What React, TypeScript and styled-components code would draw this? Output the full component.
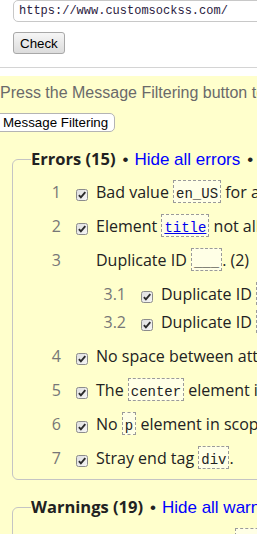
import React from "react";
import styled, { createGlobalStyle } from "styled-components";

const GlobalStyle = createGlobalStyle`
  html, body { margin: 0; padding: 0; overflow: hidden; background: #fff; }
  body { font-family: "Liberation Sans", Arial, sans-serif; }
`;

const Header = styled.div`
  display: flex;
  flex-direction: column;
  align-items: flex-start;
  gap: 10px;
  padding: 0 0 13px 13px;
  border-bottom: 1px solid #d4d4d4;
  margin-bottom: 8px;
`;

const UrlInput = styled.input`
  box-sizing: border-box;
  width: 600px;
  height: 22px;
  margin: 0;
  padding: 0 5px;
  border: 1px solid #c8c8c8;
  border-radius: 5px;
  background: #fff;
  color: #2a2040;
  font: 12px "Liberation Mono", monospace;
  outline: none;
`;

const CheckButton = styled.button`
  box-sizing: border-box;
  height: 22px;
  margin: 0;
  padding: 0 6px;
  border: 1px solid #a8a8a8;
  border-radius: 3px;
  background: linear-gradient(#f6f6f6, #dcdcdc);
  color: #000;
  font: 13.33px "Liberation Sans", Arial, sans-serif;
`;

const Results = styled.div`
  width: 900px;
  min-height: 700px;
  padding: 8px 0 40px;
  background: #ffffcc;
  font-family: "Open Sans", "Noto Sans", sans-serif;
`;

const Intro = styled.p`
  margin: 0;
  color: #6a6a6a;
  font: 16px/18px "Liberation Sans", Arial, sans-serif;
  white-space: nowrap;
`;

const FilterBar = styled.div`
  margin-top: 8px;
`;

const FilterButton = styled.button`
  box-sizing: border-box;
  height: 19px;
  margin: 0 0 0 -5px;
  padding: 0 6px 0 7px;
  border: 1px solid #b4b4b4;
  border-radius: 5px;
  background: #fff;
  color: #000;
  font: 13.33px/15px "Liberation Sans", Arial, sans-serif;
`;

const Group = styled.fieldset`
  box-sizing: border-box;
  width: 800px;
  min-width: 0;
  margin: 16px 0 0 12px;
  padding: 0 0 9px 18px;
  border: 1px solid #c4c4c4;
  border-radius: 6px;
`;

const Legend = styled.legend`
  padding: 0;
  color: #222;
  font-size: 17px;
  line-height: 22px;
  white-space: nowrap;
`;

const LegendTitle = styled.span`
  font-family: "Open Sans", "Noto Sans", sans-serif;
  font-size: 16.5px;
  font-weight: 700;
`;

const Bullet = styled.span`
  margin: 0 6px 0 7px;
  font-family: "Liberation Sans", Arial, sans-serif;
`;

const LegendLink = styled.a`
  color: #0000ff;
  text-decoration: none;
  font-family: "Liberation Sans", Arial, sans-serif;
`;

const List = styled.ol<{ $nested?: boolean }>`
  list-style: none;
  margin: 0;
  padding: ${(p) => (p.$nested ? "10px 0 0 65px" : "9px 0 0")};
  display: flex;
  flex-direction: column;
  gap: ${(p) => (p.$nested ? "4px" : "10px")};
`;

const Item = styled.li`
  margin: 0;
`;

const Row = styled.div`
  display: flex;
  align-items: flex-start;
  color: #222;
  font-size: 16px;
  line-height: 24px;
  white-space: nowrap;
`;

const Num = styled.span`
  flex: none;
  width: 30px;
  text-align: right;
  color: #777;
`;

const Box = styled.span`
  flex: none;
  display: block;
  width: 12px;
  height: 12px;
  margin: 3px 8px 0 15px;
`;

const Message = styled.span``;

const Code = styled.code`
  display: inline-block;
  padding: 5px 2px 0;
  border: 1px dashed #9a9a9a;
  background: #ffffe6;
  color: #222;
  font: 14px/16px "Liberation Mono", monospace;
`;

const CodeLink = styled.a`
  color: #0000ee;
  text-decoration: underline;
`;

const CheckMark = () => (
  <svg width="12" height="12" viewBox="0 0 12 12">
    <defs>
      <linearGradient id="cbg" x1="0" y1="0" x2="1" y2="1">
        <stop offset="0" stopColor="#dedede" />
        <stop offset="1" stopColor="#f7f7f7" />
      </linearGradient>
    </defs>
    <rect x="0.5" y="0.5" width="11" height="11" rx="2" fill="url(#cbg)" stroke="#8c8c8c" />
    <path d="M2.9 6.1 L4.9 8.3 L9.3 3.2" fill="none" stroke="#2b2b2b" strokeWidth="1.9" />
  </svg>
);

type Msg = {
  num: string;
  checked: boolean;
  content: React.ReactNode;
  children?: Msg[];
};

const errors: Msg[] = [
  {
    num: "1",
    checked: true,
    content: (
      <>
        Bad value <Code>en_US</Code> for attribute <Code>lang</Code> on element <Code>html</Code>.
      </>
    ),
  },
  {
    num: "2",
    checked: true,
    content: (
      <>
        Element{" "}
        <Code>
          <CodeLink href="#">title</CodeLink>
        </Code>{" "}
        not allowed as child of element <Code>body</Code> in this context.
      </>
    ),
  },
  {
    num: "3",
    checked: false,
    content: (
      <>
        Duplicate ID <Code>___</Code>. (2)
      </>
    ),
    children: [
      {
        num: "3.1",
        checked: true,
        content: (
          <>
            Duplicate ID <Code>___</Code>.
          </>
        ),
      },
      {
        num: "3.2",
        checked: true,
        content: (
          <>
            Duplicate ID <Code>___</Code>.
          </>
        ),
      },
    ],
  },
  { num: "4", checked: true, content: <>No space between attributes.</> },
  {
    num: "5",
    checked: true,
    content: (
      <>
        The <Code>center</Code> element is obsolete. Use CSS instead.
      </>
    ),
  },
  {
    num: "6",
    checked: true,
    content: (
      <>
        No <Code>p</Code> element in scope but a <Code>p</Code> end tag seen.
      </>
    ),
  },
  {
    num: "7",
    checked: true,
    content: (
      <>
        Stray end tag <Code>div</Code>.
      </>
    ),
  },
];

const warnings: Msg[] = [
  { num: "1", checked: true, content: <>Consider adding a <Code>lang</Code> attribute.</> },
  { num: "2", checked: true, content: <>The <Code>type</Code> attribute is unnecessary.</> },
];

const MessageList = ({ items, nested }: { items: Msg[]; nested?: boolean }) => (
  <List $nested={nested}>
    {items.map((m) => (
      <Item key={m.num}>
        <Row>
          <Num>{m.num}</Num>
          <Box>{m.checked ? <CheckMark /> : null}</Box>
          <Message>{m.content}</Message>
        </Row>
        {m.children ? <MessageList items={m.children} nested /> : null}
      </Item>
    ))}
  </List>
);

const MessageGroup = ({
  title,
  link,
  items,
}: {
  title: string;
  link: string;
  items: Msg[];
}) => (
  <Group>
    <Legend>
      <LegendTitle>{title}</LegendTitle>
      <Bullet>•</Bullet>
      <LegendLink href="#">{link}</LegendLink>
      <Bullet>•</Bullet>
      <LegendLink href="#">Show all</LegendLink>
    </Legend>
    <MessageList items={items} />
  </Group>
);

export default function App() {
  return (
    <>
      <GlobalStyle />
      <Header>
        <UrlInput readOnly value="https://www.customsockss.com/" />
        <CheckButton>Check</CheckButton>
      </Header>
      <Results>
        <Intro>
          Press the Message Filtering button to collapse the filtering options and error/warning/info counts.
        </Intro>
        <FilterBar>
          <FilterButton>Message Filtering</FilterButton>
        </FilterBar>
        <MessageGroup title="Errors (15)" link="Hide all errors" items={errors} />
        <MessageGroup title="Warnings (19)" link="Hide all warnings" items={warnings} />
      </Results>
    </>
  );
}
